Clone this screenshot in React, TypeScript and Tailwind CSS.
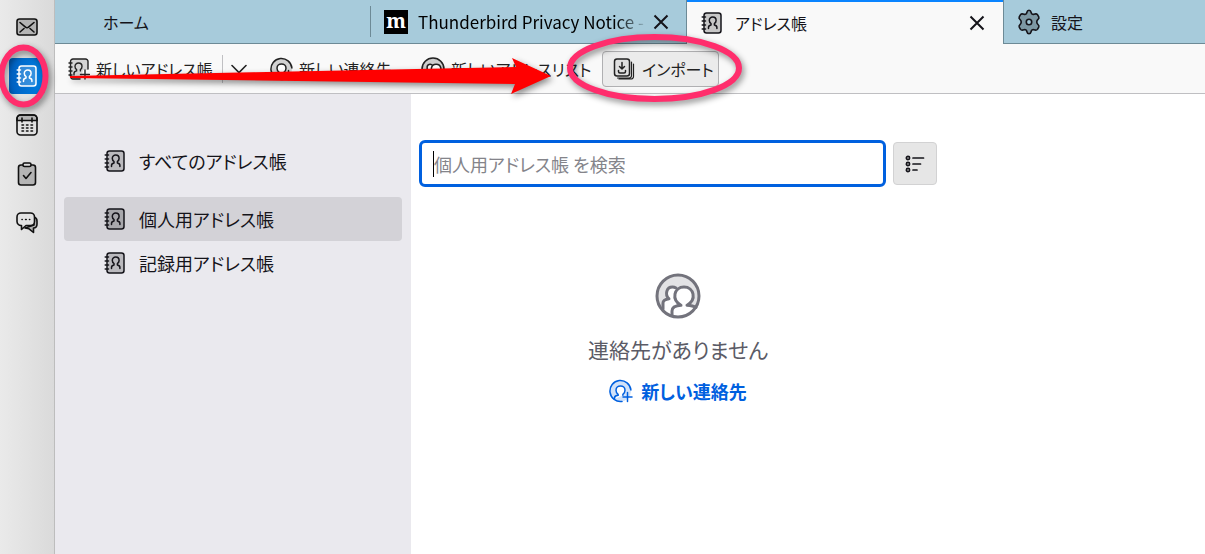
import type { ReactNode } from "react";

type IconProps = { className?: string };

const personPath =
  "M7.500 16.500v-1c0-1.500.8-2.300 2.500-2.600v-1.400C8.800 10.600 8.300 9.500 8.300 8.400 8.300 6.400 9.700 5 11.700 5s3.400 1.400 3.400 3.400c0 1.100-.5 2.200-1.700 3.100v1.400c1.700.3 2.500 1.100 2.500 2.600v1";

const AddressBookIcon = ({ className = "fill-black/20" }: IconProps) => (
  <svg viewBox="0 0 22 22" className="size-[22px] shrink-0" fill="none" stroke="currentColor" strokeWidth="1.500" strokeLinecap="round" strokeLinejoin="round">
    <rect x="3" y="1" width="17" height="20" rx="2.500" className={className} />
    <path d="M1.200 5h3.300M1.200 9h3.300M1.200 13h3.300M1.200 17h3.300" />
    <path d={personPath} />
  </svg>
);

const NewBookIcon = () => (
  <svg viewBox="0 0 22 22" className="size-[22px] shrink-0" fill="none" stroke="currentColor" strokeWidth="1.400" strokeLinecap="round">
    <path d="M20 12V3.500a2.500 2.500 0 0 0-2.500-2.500H5a2.500 2.500 0 0 0-2.500 2.500v15A2.500 2.500 0 0 0 5 21h8l2-9z" className="fill-black/15" stroke="none" />
    <path d="M20 11V3.500A2.500 2.500 0 0 0 17.500 1H5a2.500 2.500 0 0 0-2.500 2.500v15A2.500 2.500 0 0 0 5 21h7M1 5h3M1 9h3M1 13h3M1 17h3" />
    <path d="M6 17v-1.600c0-1.500 1-2.200 2.600-2.500v-1.400C7.500 10.700 7 9.600 7 8.400 7 6.400 8.500 5 10.500 5S14 6.400 14 8.400c0 1.200-.5 2.300-1.600 3.100v1.400M17 12v9M12.500 16.500h9" />
  </svg>
);

const NewContactIcon = ({ className = "" }: IconProps) => (
  <svg viewBox="0 0 24 24" className={`size-6 shrink-0 ${className}`} fill="none" stroke="currentColor" strokeWidth="1.500" strokeLinecap="round">
    <circle cx="11.500" cy="12" r="10.500" fill="currentColor" fillOpacity="0.18" stroke="none" />
    <path d="M21.900 11A10.500 10.500 0 1 0 13 22.400" />
    <path d="M5.500 20v-1c0-1.600 1.500-2.500 3.600-2.700v-1C7.600 14.200 7 12.700 7 11.200 7 8.700 9 7 11.500 7S16 8.700 16 11.200c0 1.500-.6 3-2.100 4.100v1" className="fill-white" />
    <path d="M18.500 13.500v9M14 18h9" />
  </svg>
);

const PeopleIcon = ({ className = "size-6" }: IconProps) => (
  <svg viewBox="0 0 46 46" className={`shrink-0 ${className}`} fill="none" stroke="currentColor" strokeWidth="3" strokeLinecap="round" strokeLinejoin="round">
    <circle cx="23" cy="23" r="21" fill="currentColor" fillOpacity="0.2" stroke="none" />
    <path d="M8 37V30c0-2 1-3.500 5-4.500-3-4-3-11 4.500-11.500 2 0 3.500.8 4.500 2l-1 20-4 7z" className="fill-white" stroke="none" />
    <path d="M8 36v-6c0-2.500 2-3.500 6-4.200-4.500-4.300-2.500-11.800 3.500-11.800 1.300 0 2.500.4 3.500 1" />
    <path d="M17 43v-5c0-4 3-5.500 9-5.800-10-5.500-7-18.200 3-18.200s13 12.700 3 18.200c4 .2 6.500.8 8.500 2L33 42l-8 2z" className="fill-white" stroke="none" />
    <path d="M17 42v-4c0-4 3-5.500 9-5.800-10-5.500-7-18.200 3-18.200s13 12.700 3 18.200c4 .2 6.500.6 9 2.300" />
    <circle cx="23" cy="23" r="21" />
  </svg>
);

const ImportIcon = () => (
  <svg viewBox="0 0 22 22" className="size-[22px] shrink-0" fill="none" stroke="currentColor" strokeWidth="1.500" strokeLinecap="round" strokeLinejoin="round">
    <rect x="1.500" y="1" width="15" height="17" rx="2.500" className="fill-black/5" />
    <path d="M18.500 4v13.500a2.500 2.500 0 0 1-2.500 2.500H4.500M20.500 6v12.500a2.500 2.500 0 0 1-2.500 2.500H6" strokeWidth="1.200" />
    <path d="M9 4.500v6.500M6.500 8.500 9 11l2.500-2.500M5.500 12.500v1c0 1 .5 1.500 1.500 1.500h4c1 0 1.500-.5 1.500-1.500v-1" />
  </svg>
);

const CloseIcon = () => (
  <svg viewBox="0 0 16 16" className="size-4" stroke="currentColor" strokeWidth="2">
    <path d="m1.500 1.500 13 13M14.500 1.500l-13 13" />
  </svg>
);

const GearIcon = () => (
  <svg viewBox="1 0 22 24" className="h-[26px] w-6 shrink-0" fill="none" stroke="currentColor" strokeWidth="1.500" strokeLinejoin="round">
    <path d="M10 3.200c.3-1.400.9-2 2-2s1.700.6 2 2c.3 1.500 1.200 2 2.600 1.600 1.600-.5 2.600-.4 3.200.4l1.200 2c.5.9.2 1.700-.9 2.700-1.200 1.100-1.200 3.100 0 4.200 1.100 1 1.400 1.800.9 2.700l-1.200 2c-.6.800-1.600.9-3.200.4-1.400-.4-2.300.1-2.600 1.600-.3 1.400-.9 2-2 2s-1.700-.6-2-2c-.3-1.500-1.200-2-2.600-1.600-1.600.5-2.600.4-3.200-.4l-1.200-2c-.5-.9-.2-1.700.9-2.700 1.200-1.100 1.200-3.100 0-4.200-1.100-1-1.400-1.800-.9-2.700l1.200-2c.6-.8 1.600-.9 3.200-.4C8.800 5.200 9.700 4.700 10 3.200z" className="fill-black/25" />
    <circle cx="12" cy="12" r="2.500" className="fill-[#a7cbdb]" />
  </svg>
);

const MailIcon = () => (
  <svg viewBox="0 0 22 18" className="w-[22px]" fill="none" stroke="currentColor" strokeWidth="1.600" strokeLinecap="round">
    <rect x="1" y="1" width="20" height="16" rx="2.500" className="fill-black/20" />
    <path d="m4 4.500 5.500 4.700c1 .8 2 .8 3 0L18 4.500M4 14l4-3.500M18 14l-4-3.500" />
  </svg>
);

const CalendarIcon = () => (
  <svg viewBox="0 0 22 22" className="size-[22px]" fill="none" stroke="currentColor" strokeWidth="1.600" strokeLinecap="round">
    <rect x="1" y="1" width="20" height="20" rx="3.500" />
    <path d="M1 6.500V4.500A3.500 3.500 0 0 1 4.500 1h13A3.500 3.500 0 0 1 21 4.500v2z" className="fill-black/20" />
    <path d="M6 4v4M16 4v4M6 11h1.500M10.500 11h1.500M15 11h1.500M6 14h1.500M10.500 14h1.500M15 14h1.500M6 17h1.500M10.500 17h1.500M15 17h1.500" />
  </svg>
);

const TasksIcon = () => (
  <svg viewBox="0 0 20 24" className="h-6" fill="none" stroke="currentColor" strokeWidth="1.600" strokeLinecap="round" strokeLinejoin="round">
    <rect x="1.500" y="3" width="17" height="20" rx="2.500" className="fill-black/20" />
    <rect x="6" y="1" width="8" height="3.500" rx="1.500" className="fill-[#dedede]" />
    <path d="m6.500 13.500 2.500 3 5-6" />
  </svg>
);

const ChatIcon = () => (
  <svg viewBox="0 0 22 22" className="size-[22px]" fill="none" stroke="currentColor" strokeWidth="1.600" strokeLinecap="round" strokeLinejoin="round">
    <path d="M18 5c2 .5 3 2 3 4v3c0 2.300-1.500 4-3.500 4v4.500L13 16.800l-4-.8 9-3z" className="fill-black/20" />
    <path d="M5 1h9.500a4 4 0 0 1 4 4v4.500a4 4 0 0 1-4 4H10l-4.500 4v-4A4 4 0 0 1 1 9.500V5a4 4 0 0 1 4-4z" className="fill-[#e3e3e3]" />
    <path d="M6 7.500h.2M9.600 7.500h.6M13.500 7.500h.2" />
  </svg>
);

const ListIcon = () => (
  <svg viewBox="0 0 20 18" className="w-5" fill="none" stroke="currentColor" strokeWidth="1.700" strokeLinecap="round">
    <circle cx="3" cy="3" r="1.600" />
    <circle cx="3" cy="9" r="1.600" />
    <circle cx="3" cy="15" r="1.600" />
    <path d="M8 3h10.500M8 9h7.500M8 15h4" />
  </svg>
);

const spaces: { label: string; icon: ReactNode; active?: boolean }[] = [
  { label: "メール", icon: <MailIcon /> },
  { label: "アドレス帳", icon: <AddressBookIcon className="fill-white/20" />, active: true },
  { label: "カレンダー", icon: <CalendarIcon /> },
  { label: "ToDo", icon: <TasksIcon /> },
  { label: "チャット", icon: <ChatIcon /> },
];

const books = [
  { name: "すべてのアドレス帳", style: "mb-[14px]" },
  { name: "個人用アドレス帳", style: "bg-[#d3d2d7]" },
  { name: "記録用アドレス帳", style: "" },
];

const SpacesBar = () => (
  <nav className="flex w-[55px] shrink-0 flex-col items-center gap-[13px] border-r border-[#bdbdbd] bg-linear-to-r from-[#eaeaea] to-[#dadada] pt-[9px]">
    {spaces.map((space) => (
      <button
        key={space.label}
        aria-label={space.label}
        className={`flex size-9 items-center justify-center rounded-sm ${space.active ? "bg-linear-to-r from-[#0060c0] to-[#0080e4] text-white" : "text-[#111]"}`}
      >
        {space.icon}
      </button>
    ))}
  </nav>
);

const TabBar = () => (
  <div role="tablist" className="flex h-11 bg-[#a7cbdb] text-base">
    <div className="flex w-[316px] items-center border-b border-[#6d8a96]">
      <button role="tab" className="w-full pl-12 text-left">ホーム</button>
      <span className="h-[31px] w-px bg-[#6d8a96]" />
    </div>
    <div className="flex w-[316px] items-center border-r border-b border-[#6d8a96] pl-[13px]">
      <button role="tab" className="flex min-w-0 flex-1 items-center gap-[10px]">
        <span className="flex size-6 shrink-0 items-center justify-center bg-black pb-0.5 font-['Noto_Serif','DejaVu_Serif',serif] text-xl leading-none font-bold text-white">m</span>
        <span className="bg-linear-to-r from-black from-85% to-[#8fb0be] bg-clip-text text-[17px] whitespace-nowrap text-transparent">Thunderbird Privacy Notice -</span>
      </button>
      <button aria-label="タブを閉じる" className="mr-[17px] ml-2"><CloseIcon /></button>
    </div>
    <div className="flex w-[316px] items-center border-t-2 border-[#0a84ff] bg-[#f9f9f9] pr-[18px] pl-[14px]">
      <button role="tab" aria-selected="true" className="flex flex-1 items-center gap-3">
        <AddressBookIcon />
        アドレス帳
      </button>
      <button aria-label="タブを閉じる"><CloseIcon /></button>
    </div>
    <div className="flex flex-1 items-center border-b border-l border-[#6d8a96] pl-[13px]">
      <button role="tab" className="flex items-center gap-[10px]">
        <GearIcon />
        設定
      </button>
    </div>
  </div>
);

const Toolbar = () => (
  <div role="toolbar" className="flex h-[50px] items-center border-b border-[#bfbfc2] bg-[#f9f9f9] pl-[13px] text-base text-[#222]">
    <button className="flex w-[154px] items-center gap-[6px] whitespace-nowrap">
      <NewBookIcon />
      新しいアドレス帳
    </button>
    <button aria-label="その他の作成方法" className="flex h-7 w-[48px] items-center border-l border-[#c0c0c3] pl-2">
      <svg viewBox="0 0 16 10" className="w-4" fill="none" stroke="currentColor" strokeWidth="1.600" strokeLinecap="round">
        <path d="m1 1.500 7 7 7-7" />
      </svg>
    </button>
    <button className="flex w-[151px] items-center gap-[5px] whitespace-nowrap">
      <NewContactIcon />
      新しい連絡先
    </button>
    <button className="flex w-[181px] items-center gap-[6px] whitespace-nowrap">
      <PeopleIcon />
      新しいアドレスリスト
    </button>
    <button className="flex h-9 w-[117px] items-center gap-[7px] rounded border border-[#b0b0b2] bg-[#ebebeb] pl-[10px] whitespace-nowrap">
      <ImportIcon />
      インポート
    </button>
  </div>
);

const Annotations = () => (
  <svg viewBox="0 0 1205 554" className="pointer-events-none absolute top-0 left-0 h-[554px] w-[1205px] drop-shadow-[2px_3px_3px_rgba(0,0,0,0.45)]" fill="none" aria-hidden="true">
    <path d="M70 76 516 67 512 58 551 76 511 94 515 84 70 78z" fill="#ff0000" />
    <g stroke="#ff2d6c" strokeWidth="6">
      <ellipse cx="23.500" cy="76" rx="22" ry="28.500" />
      <ellipse cx="654.500" cy="68" rx="84.500" ry="31" />
    </g>
  </svg>
);

const App = () => (
  <div className="relative flex min-h-screen overflow-hidden bg-white font-['Noto_Sans_CJK_JP',sans-serif] text-[#15141a] [font-feature-settings:'palt']">
    <SpacesBar />
    <div className="flex min-w-0 flex-1 flex-col">
      <TabBar />
      <Toolbar />
      <div className="flex flex-1">
        <aside className="w-[356px] shrink-0 bg-[#eae9ee] px-[9px] pt-[45px] text-lg">
          {books.map((book) => (
            <button key={book.name} className={`flex h-11 w-full items-center gap-[13px] rounded pl-10 ${book.style}`}>
              <AddressBookIcon />
              {book.name}
            </button>
          ))}
        </aside>
        <main className="w-[534px] px-2 pt-[46px]">
          <div className="flex items-center gap-[7px]">
            <div className="relative flex-1">
              <input
                type="search"
                aria-label="個人用アドレス帳 を検索"
                placeholder="個人用アドレス帳 を検索"
                className="block h-[47px] w-full rounded-md border-3 border-[#0060df] bg-white px-3 text-lg outline-none placeholder:text-[#84848a]"
              />
              <span className="absolute top-[11px] left-[14px] h-[26px] w-px bg-black" />
            </div>
            <button aria-label="表示オプション" className="flex h-[43px] w-11 items-center justify-center rounded border border-[#d2d2d3] bg-[#e6e6e6]">
              <ListIcon />
            </button>
          </div>
          <div className="flex flex-col items-center pt-[86px] text-[#5b5b66]">
            <PeopleIcon className="size-[46px] text-[#73737c]" />
            <p className="mt-3 text-[21px] leading-9">連絡先がありません</p>
            <button className="mt-2 flex items-center gap-2 text-lg leading-8 font-bold text-[#0060df]">
              <NewContactIcon />
              新しい連絡先
            </button>
          </div>
        </main>
      </div>
    </div>
    <Annotations />
  </div>
);

export default App;
